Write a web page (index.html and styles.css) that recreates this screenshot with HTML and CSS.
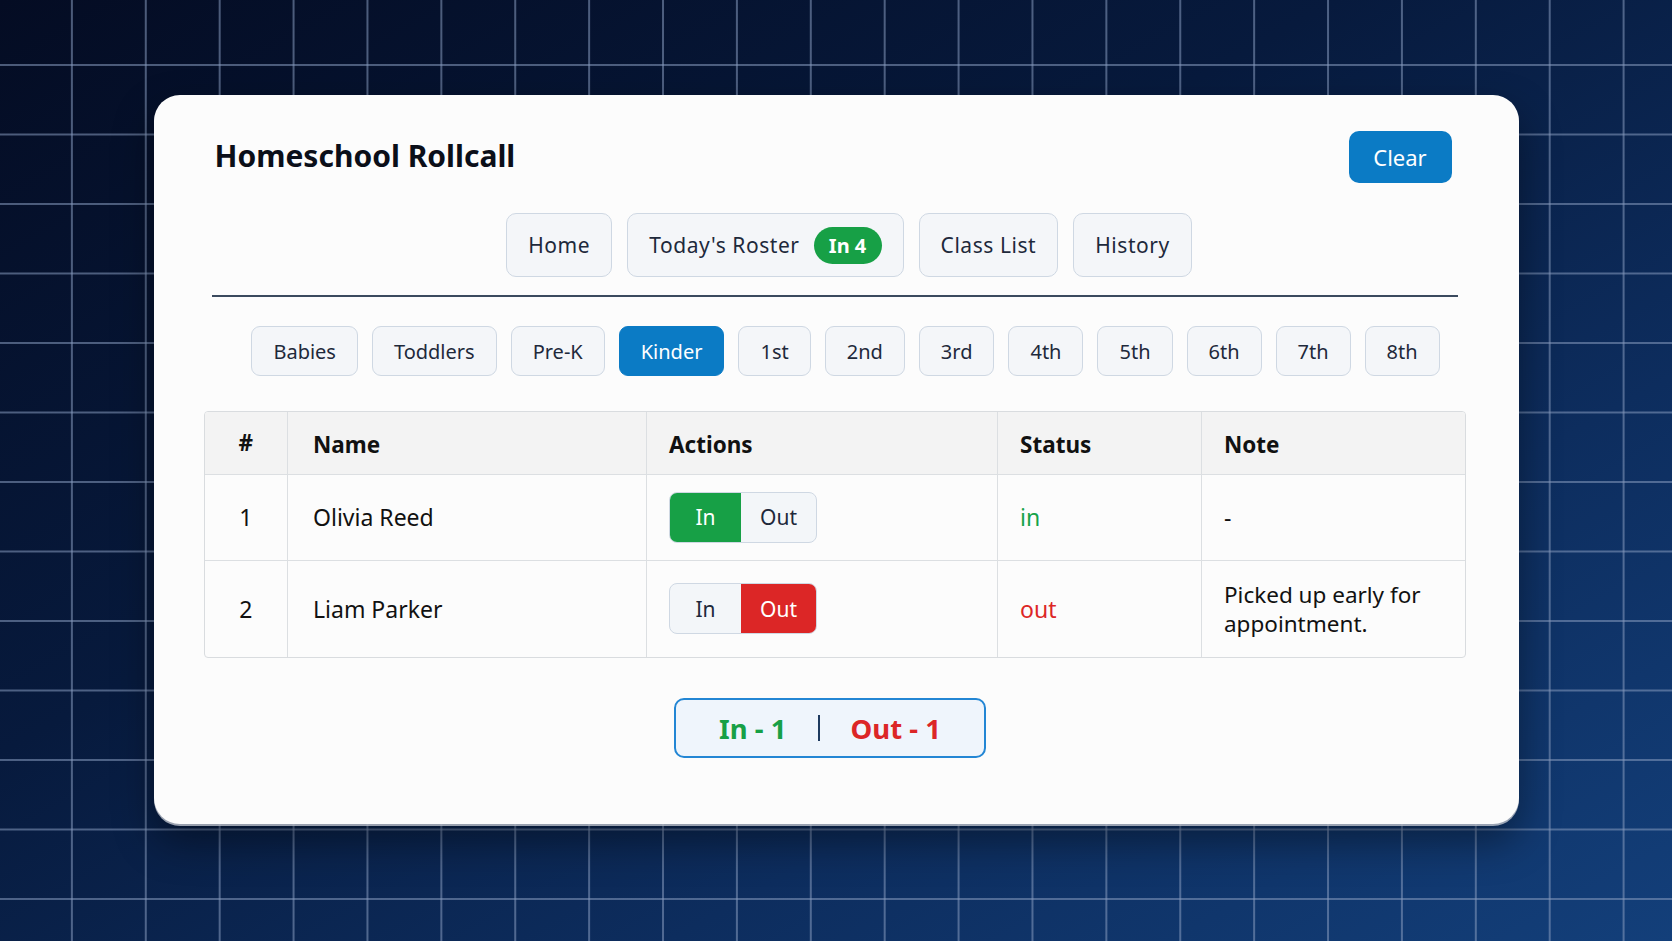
FILE: index.html
```html
<!DOCTYPE html>
<html lang="en">
<head>
<meta charset="utf-8">
<title>Homeschool Rollcall</title>
<link rel="stylesheet" href="styles.css">
</head>
<body>
<main class="card">
  <header class="header">
    <h1 class="title">Homeschool Rollcall</h1>
    <button class="clear-btn">Clear</button>
  </header>

  <nav class="tabs">
    <button class="tab">Home</button>
    <button class="tab">Today's Roster <span class="badge">In 4</span></button>
    <button class="tab">Class List</button>
    <button class="tab">History</button>
  </nav>

  <div class="divider"></div>

  <div class="grades">
    <button class="grade">Babies</button>
    <button class="grade">Toddlers</button>
    <button class="grade">Pre-K</button>
    <button class="grade active">Kinder</button>
    <button class="grade">1st</button>
    <button class="grade">2nd</button>
    <button class="grade">3rd</button>
    <button class="grade">4th</button>
    <button class="grade">5th</button>
    <button class="grade">6th</button>
    <button class="grade">7th</button>
    <button class="grade">8th</button>
  </div>

  <div class="table-wrap">
    <table class="roster">
      <colgroup>
        <col class="c-num"><col class="c-name"><col class="c-act"><col class="c-status"><col class="c-note">
      </colgroup>
      <thead>
        <tr><th class="num">#</th><th class="name">Name</th><th>Actions</th><th>Status</th><th>Note</th></tr>
      </thead>
      <tbody>
        <tr class="r1">
          <td class="num">1</td>
          <td class="name">Olivia Reed</td>
          <td><div class="toggle"><span class="seg seg-in on-in">In</span><span class="seg seg-out">Out</span></div></td>
          <td class="st-in">in</td>
          <td>-</td>
        </tr>
        <tr class="r2">
          <td class="num">2</td>
          <td class="name">Liam Parker</td>
          <td><div class="toggle"><span class="seg seg-in">In</span><span class="seg seg-out on-out">Out</span></div></td>
          <td class="st-out">out</td>
          <td class="note">Picked up early for appointment.</td>
        </tr>
      </tbody>
    </table>
  </div>

  <div class="summary-row">
    <div class="summary">
      <span class="sum-in">In - 1</span>
      <span class="sum-sep"></span>
      <span class="sum-out">Out - 1</span>
    </div>
  </div>
</main>
</body>
</html>
```
FILE: styles.css
```css
* { box-sizing: border-box; }

html, body { height: 100%; }

body {
  margin: 0;
  height: 941px;
  overflow: hidden;
  font-family: "Noto Sans", "Open Sans", sans-serif;
  color: #111827;
  background-color: #0a1f47;
  background-image:
    linear-gradient(to right, rgba(135, 155, 190, 0.55) 2px, transparent 2px),
    linear-gradient(to bottom, rgba(135, 155, 190, 0.55) 2px, transparent 2px),
    linear-gradient(to bottom right, #040c23 0%, #071a3d 40%, #0d2d5e 70%, #133f7a 100%);
  background-size: 73.9px 69.5px, 73.9px 69.5px, 100% 100%;
  background-position: -3px -5.5px, -3px -5.5px, 0 0;
  padding-top: 95px;
}

.card {
  width: 1365px;
  height: 729px;
  margin: 0 auto;
  padding-top: 36px;
  background: #fcfcfc;
  border-radius: 26px;
  box-shadow: 0 2px 0 rgba(190, 195, 205, 0.8), 0 18px 40px rgba(0, 0, 0, 0.4);
}

.header {
  display: flex;
  justify-content: space-between;
  align-items: center;
  height: 52px;
  padding: 0 67px 0 61px;
}

.title {
  margin: 0 0 4px;
  font-size: 30px;
  font-weight: 700;
  color: #0b0f19;
}

.clear-btn {
  height: 52px;
  width: 103px;
  border: none;
  border-radius: 10px;
  background: #0b7bc5;
  color: #fff;
  font-family: inherit;
  font-size: 22px;
}

.tabs {
  display: flex;
  justify-content: center;
  gap: 15px;
  margin-top: 30px;
  padding-left: 26px;
}

.tab {
  display: inline-flex;
  align-items: center;
  height: 64px;
  padding: 0 21px;
  border: 1.5px solid #cfd8e3;
  border-radius: 10px;
  background: #f4f6f9;
  color: #1e293b;
  font-family: inherit;
  font-size: 21px;
  letter-spacing: 0.55px;
}

.badge {
  display: inline-flex;
  align-items: center;
  justify-content: center;
  width: 68px;
  height: 37px;
  margin-left: 14px;
  border-radius: 999px;
  background: #17a046;
  color: #fff;
  font-weight: 700;
  font-size: 20px;
  letter-spacing: 0;
}

.divider {
  height: 2px;
  margin: 18px 61px 0 58px;
  background: #3b4a5e;
}

.grades {
  display: flex;
  justify-content: center;
  gap: 14px;
  margin-top: 29px;
  padding-left: 19px;
}

.grade {
  height: 50px;
  padding: 0 21px;
  border: 1.5px solid #cfd8e3;
  border-radius: 9px;
  background: #f4f6f9;
  color: #1e293b;
  font-family: inherit;
  font-size: 20px;
}

.grade.active {
  background: #0b7bc5;
  border-color: #0b7bc5;
  color: #fff;
}

.table-wrap {
  margin: 35px 53px 0 50px;
  border: 1.5px solid #d9dcdf;
  border-radius: 4px;
  overflow: hidden;
}

.roster {
  width: 100%;
  border-collapse: collapse;
  table-layout: fixed;
  font-size: 23px;
  color: #111;
}

.c-num { width: 83px; }
.c-name { width: 359px; }
.c-act { width: 351px; }
.c-status { width: 204px; }

.roster th,
.roster td {
  padding: 0 22px;
  text-align: left;
  vertical-align: middle;
  border: 1.5px solid #dcdfe2;
}

.roster tr > :first-child { border-left: none; }
.roster tr > :last-child { border-right: none; }
.roster thead th { border-top: none; }
.roster tbody tr:last-child td { border-bottom: none; }

.roster th {
  height: 62px;
  background: #f3f3f3;
  font-weight: 700;
  font-size: 22.5px;
  padding-top: 3px;
}

.roster .num { text-align: center; padding: 0; }
.roster .name { padding-left: 25px; }

.r1 td { height: 86px; }
.r2 td { height: 97px; }

.note { line-height: 29px; padding-top: 2px; font-size: 22.5px; }

.toggle {
  display: inline-flex;
  height: 51px;
  border: 1.5px solid #cfd8e3;
  border-radius: 8px;
  overflow: hidden;
  background: #f3f6f9;
}

.seg {
  display: flex;
  align-items: center;
  justify-content: center;
  font-size: 21px;
  color: #1e293b;
}

.seg-in { width: 71px; }
.seg-out { width: 75px; }

.on-in { background: #17a046; color: #fff; }
.on-out { background: #dc2626; color: #fff; }

.st-in { color: #16a34a; }
.st-out { color: #dc2626; }

.summary-row {
  display: flex;
  justify-content: center;
  margin-top: 40px;
  padding-right: 12px;
}

.summary {
  display: flex;
  align-items: center;
  justify-content: center;
  gap: 31px;
  width: 312px;
  height: 60px;
  border: 2px solid #2386d4;
  border-radius: 10px;
  background: #eff5fc;
  font-size: 27.5px;
  font-weight: 700;
}

.sum-in { color: #17a046; }
.sum-out { color: #dc2626; }

.sum-sep {
  width: 2px;
  height: 26px;
  background: #1e3a5f;
}
```
